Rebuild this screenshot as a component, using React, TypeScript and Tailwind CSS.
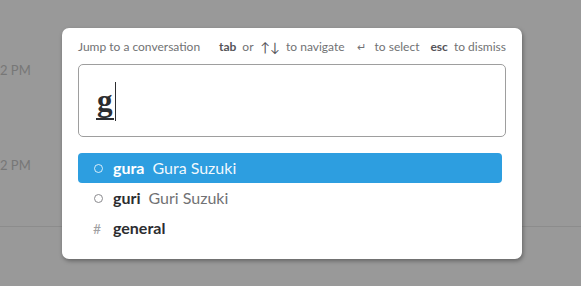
import { Fragment } from 'react'

type Item = { kind: 'user' | 'channel'; handle: string; name?: string }

const items: Item[] = [
  { kind: 'user', handle: 'gura', name: 'Gura Suzuki' },
  { kind: 'user', handle: 'guri', name: 'Guri Suzuki' },
  { kind: 'channel', handle: 'general' },
]

const hints: { key: string; text: string; keyClass: string }[] = [
  { key: 'tab', text: 'or', keyClass: 'font-bold text-[#555459]' },
  { key: '↑↓', text: 'to navigate', keyClass: 'ml-[7px] text-[13px] text-[#555459]' },
  { key: '↵', text: 'to select', keyClass: 'ml-[12px] pr-[3px] text-[11px] text-[#717274]' },
  { key: 'esc', text: 'to dismiss', keyClass: 'ml-[11px] font-bold text-[#555459]' },
]

export default function App() {
  const selected = 0

  return (
    <div className="relative h-[286px] w-[581px] overflow-hidden bg-[#999999] font-['Lato','Liberation_Sans',sans-serif]">
      {/* Background message list */}
      <div className="flex flex-col pt-[61px]">
        <div className="h-[19px] text-[13px] leading-[19px] text-[#777777]">2 PM</div>
        <div className="mt-[76px] h-[19px] text-[13px] leading-[19px] text-[#777777]">2 PM</div>
        <div className="mt-[51px] h-px w-full bg-[#8c8c8c]" />
      </div>

      {/* Switcher */}
      <div className="absolute left-[62px] top-[28px] flex h-[231px] w-[460px] flex-col rounded-[7px] bg-white px-4 pt-[12px] shadow-[1px_2px_4px_rgba(0,0,0,0.35)]">
        <div className="flex h-[14px] items-center justify-between whitespace-nowrap text-[12px] leading-[14px] text-[#717274]">
          <span>Jump to a conversation</span>
          <div className="flex items-center">
            {hints.map(h => (
              <Fragment key={h.key}>
                <span className={h.keyClass}>{h.key}</span>
                <span className="ml-[6px]">{h.text}</span>
              </Fragment>
            ))}
          </div>
        </div>

        <div className="mt-[10px] flex h-[73px] items-center rounded-[5px] border border-[#9e9e9e] pl-[17px]">
          <span className="mt-[2px] block h-[36px] border-b-2 border-[#2c2d30] px-px font-['Liberation_Serif','DejaVu_Serif',serif] text-[31px] font-bold leading-[34px] text-[#2c2d30]">
            g
          </span>
          <span className="ml-[1px] mt-[2px] h-[39px] w-px bg-[#2c2d30]" />
        </div>

        <div className="mt-[16px] flex flex-col pr-[4px]">
          {items.map((it, i) => {
            const active = i === selected
            return (
              <div
                key={it.handle}
                className={
                  active
                    ? 'flex h-[30px] items-center rounded-[4px] bg-[#2d9ee0] pl-[16px] text-white'
                    : 'flex h-[30px] items-center rounded-[4px] pl-[16px] text-[#2c2d30]'
                }
              >
                <div className="flex w-[19px] items-center">
                  {it.kind === 'user' ? (
                    <span
                      className={
                        active
                          ? 'h-[9px] w-[9px] rounded-full border-[1.5px] border-white/80'
                          : 'h-[9px] w-[9px] rounded-full border-[1.5px] border-[#8a8a8e]'
                      }
                    />
                  ) : (
                    <span className="-ml-[1px] text-[14px] text-[#a0a0a2]">#</span>
                  )}
                </div>
                <span className="text-[16px] font-bold leading-[20px]">{it.handle}</span>
                {it.name && (
                  <span
                    className={
                      active
                        ? 'ml-[8px] text-[16px] leading-[20px] text-white/95'
                        : 'ml-[8px] text-[16px] leading-[20px] text-[#717274]'
                    }
                  >
                    {it.name}
                  </span>
                )}
              </div>
            )
          })}
        </div>
      </div>
    </div>
  )
}
